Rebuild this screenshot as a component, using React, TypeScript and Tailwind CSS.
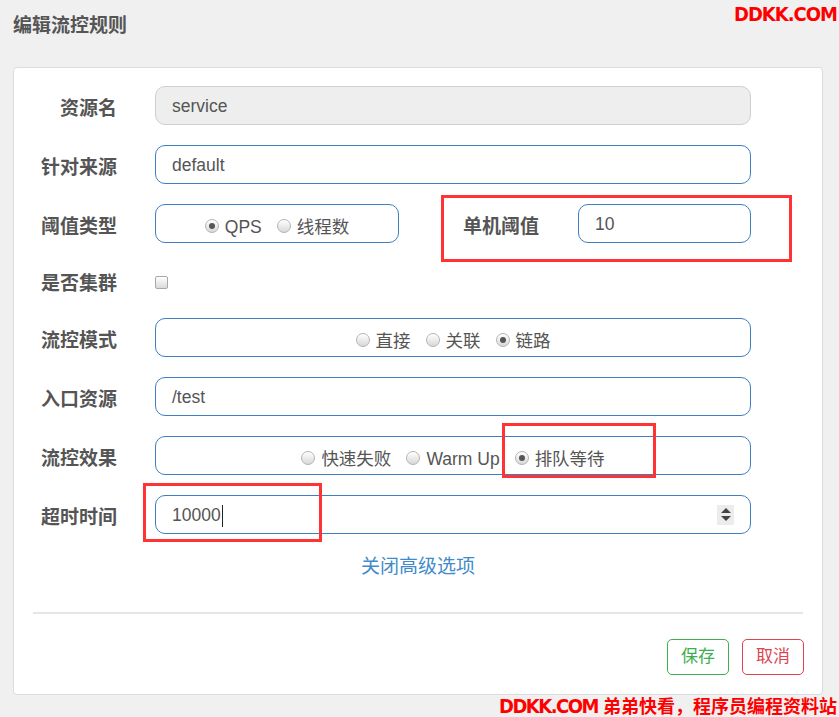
import React from 'react';

const font = "font-['Liberation_Sans','Noto_Sans_CJK_SC',sans-serif]";

function Radio({ checked }: { checked?: boolean }) {
  return (
    <span className="inline-flex w-[14px] h-[14px] items-center justify-center rounded-full border border-[#b3b3b3] bg-gradient-to-b from-white to-[#d8d8d8] shadow-[inset_0_1px_1px_rgba(255,255,255,0.8)]">
      {checked && <span className="block w-[6px] h-[6px] rounded-full bg-[#555]" />}
    </span>
  );
}

function RadioGroup({ items }: { items: { label: string; checked?: boolean }[] }) {
  return (
    <div className="flex items-center justify-center gap-[15px] pt-[5px] text-[17.5px] text-[#555]">
      {items.map((it) => (
        <label key={it.label} className="flex items-center gap-[6px]">
          <Radio checked={it.checked} />
          <span className="leading-none pt-[3px]">{it.label}</span>
        </label>
      ))}
    </div>
  );
}

function Label({ children, w = 'w-[103px] text-right' }: { children: React.ReactNode; w?: string }) {
  return (
    <div className={`${w} shrink-0 pt-[5px] text-[19px] font-bold text-[#555] leading-none`}>
      {children}
    </div>
  );
}

const box =
  'h-[39px] rounded-[10px] border border-[#3d7fc1] bg-white flex items-center text-[17.5px] text-[#555]';

export default function App() {
  return (
    <div className={`relative w-[839px] h-[717px] overflow-hidden bg-[#f0f0f0] ${font}`}>
      {/* Watermark top */}
      <div className="absolute right-[2px] top-[-1px] text-[20px] font-bold text-[#ff0000] tracking-[-1px] font-['DejaVu_Sans_Condensed','DejaVu_Sans',sans-serif]">
        DDKK.COM
      </div>

      <h1 className="pl-[13px] pt-[13px] text-[19px] font-bold leading-[26px] text-[#555]">编辑流控规则</h1>

      <div className="ml-[13px] mt-[28px] w-[810px] rounded-[4px] border border-[#dcdcdc] bg-white pt-[18px] pb-[19px]">
        <div className="flex flex-col gap-[20px] pr-[71px]">
          {/* 资源名 */}
          <div className="flex items-center">
            <Label>资源名</Label>
            <div className="ml-[38px] flex-1 h-[39px] rounded-[10px] border border-[#cfcfcf] bg-[#eeeeee] flex items-center pl-[16px] pt-[2px] text-[17.5px] text-[#555]">
              service
            </div>
          </div>

          {/* 针对来源 */}
          <div className="flex items-center">
            <Label>针对来源</Label>
            <div className={`ml-[38px] flex-1 pl-[16px] pt-[2px] ${box}`}>default</div>
          </div>

          {/* 阈值类型 + 单机阈值 */}
          <div className="relative flex items-center">
            <Label>阈值类型</Label>
            <div className={`ml-[38px] w-[244px] justify-center ${box}`}>
              <RadioGroup items={[{ label: 'QPS', checked: true }, { label: '线程数' }]} />
            </div>
            <Label w="w-[77px] ml-[64px] text-left">单机阈值</Label>
            <div className={`ml-[38px] flex-1 pl-[16px] pt-[2px] ${box}`}>10</div>
            <div className="pointer-events-none absolute left-[427px] top-[-9px] w-[351px] h-[67px] border-[3px] border-[#ff3333]" />
          </div>

          {/* 是否集群 */}
          <div className="flex items-center h-[35px]">
            <Label>是否集群</Label>
            <span className="ml-[38px] mt-[3px] block w-[13px] h-[13px] rounded-[2px] border border-[#a8a8a8] bg-gradient-to-b from-white to-[#dadada]" />
          </div>

          {/* 流控模式 */}
          <div className="flex items-center">
            <Label>流控模式</Label>
            <div className={`ml-[38px] flex-1 justify-center ${box}`}>
              <RadioGroup items={[{ label: '直接' }, { label: '关联' }, { label: '链路', checked: true }]} />
            </div>
          </div>

          {/* 入口资源 */}
          <div className="flex items-center">
            <Label>入口资源</Label>
            <div className={`ml-[38px] flex-1 pl-[16px] pt-[2px] ${box}`}>/test</div>
          </div>

          {/* 流控效果 */}
          <div className="relative flex items-center">
            <Label>流控效果</Label>
            <div className={`ml-[38px] flex-1 justify-center ${box}`}>
              <RadioGroup
                items={[{ label: '快速失败' }, { label: 'Warm Up' }, { label: '排队等待', checked: true }]}
              />
            </div>
            <div className="pointer-events-none absolute left-[488px] top-[-13px] w-[154px] h-[55px] border-[3px] border-[#ff3333]" />
          </div>

          {/* 超时时间 */}
          <div className="relative flex items-center">
            <Label>超时时间</Label>
            <div className={`ml-[38px] flex-1 pl-[16px] pr-[16px] ${box}`}>
              <span className="pt-[2px]">10000</span>
              <span className="ml-px mt-[2px] block w-px h-[22px] bg-[#222]" />
              <span className="ml-auto flex w-[17px] h-[20px] flex-col items-center justify-center gap-[3px] bg-[#ececec]">
                <span className="block w-0 h-0 border-x-[5px] border-x-transparent border-b-[5px] border-b-[#444]" />
                <span className="block w-0 h-0 border-x-[5px] border-x-transparent border-t-[5px] border-t-[#444]" />
              </span>
            </div>
            <div className="pointer-events-none absolute left-[129px] top-[-12px] w-[179px] h-[59px] border-[3px] border-[#ff3333]" />
          </div>
        </div>

        <div className="mt-[20px] text-center text-[19px] leading-[25px] text-[#428bca]">关闭高级选项</div>

        <div className="mx-[19px] mt-[33px] h-[2px] bg-[#e5e5e5]" />

        <div className="mt-[25px] mr-[18px] flex justify-end gap-[13px]">
          <button className="w-[62px] h-[36px] rounded-[5px] border border-[#3fae4f] bg-white text-[17px] text-[#3fae4f]">
            保存
          </button>
          <button className="w-[62px] h-[36px] rounded-[5px] border border-[#e0434f] bg-white text-[17px] text-[#e0434f]">
            取消
          </button>
        </div>
      </div>

      {/* Watermark bottom */}
      <div className="absolute right-[2px] bottom-0 text-[18px] font-bold leading-[20px] text-[#ff0000] whitespace-nowrap">
        <span className="font-['DejaVu_Sans_Condensed','DejaVu_Sans',sans-serif] tracking-[-1.5px] text-[20px]">DDKK.COM</span>{' '}
        <span>弟弟快看，程序员编程资料站</span>
      </div>
    </div>
  );
}
